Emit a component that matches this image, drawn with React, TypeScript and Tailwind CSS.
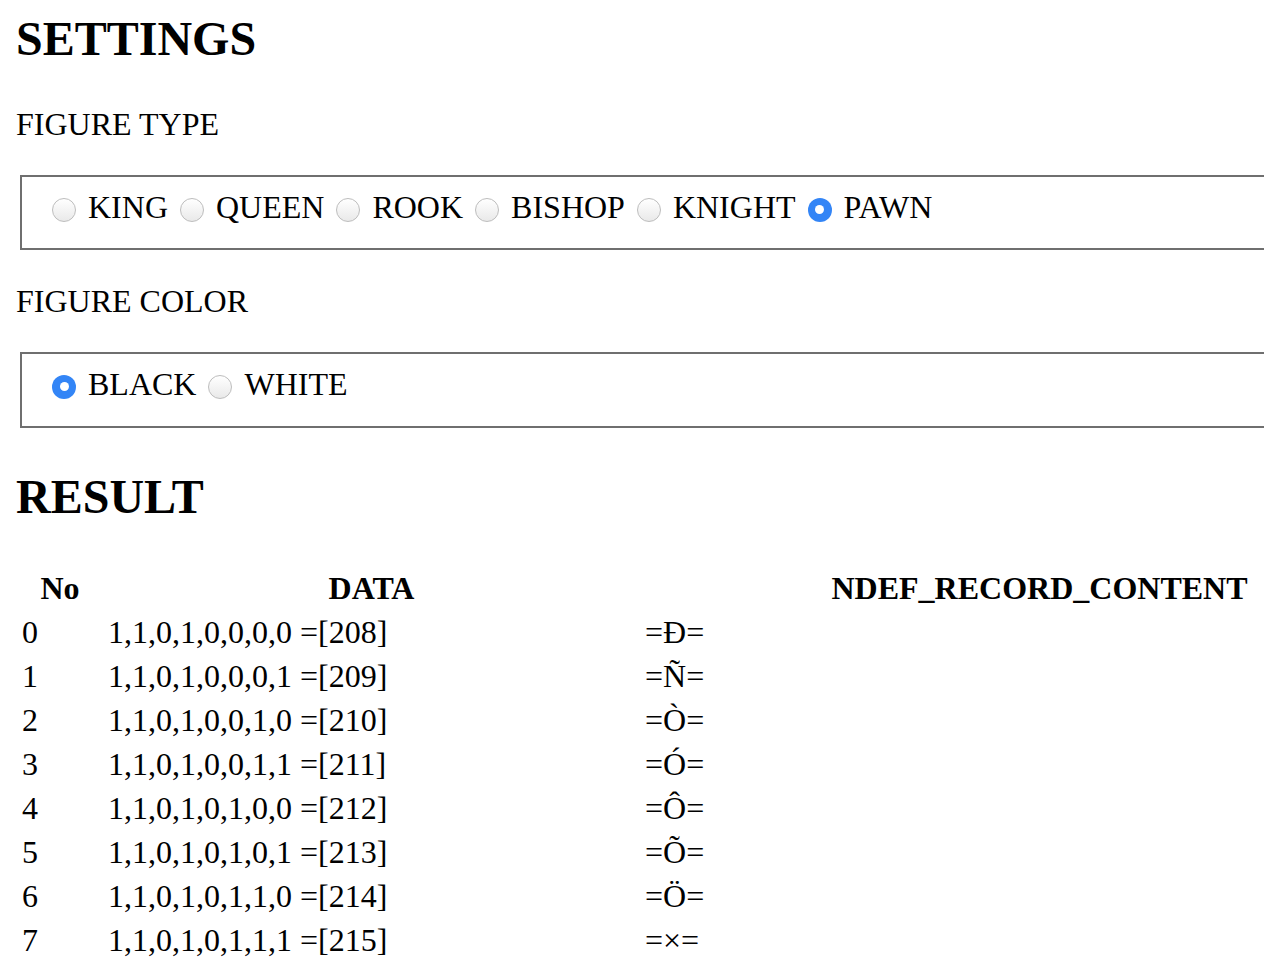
import { useState } from "react";

const figureTypes = ["KING", "QUEEN", "ROOK", "BISHOP", "KNIGHT", "PAWN"] as const;
const figureColors = ["BLACK", "WHITE"] as const;

const rows = [
  { no: 0, data: "1,1,0,1,0,0,0,0 =[208]", content: "=Đ=" },
  { no: 1, data: "1,1,0,1,0,0,0,1 =[209]", content: "=Ñ=" },
  { no: 2, data: "1,1,0,1,0,0,1,0 =[210]", content: "=Ò=" },
  { no: 3, data: "1,1,0,1,0,0,1,1 =[211]", content: "=Ó=" },
  { no: 4, data: "1,1,0,1,0,1,0,0 =[212]", content: "=Ô=" },
  { no: 5, data: "1,1,0,1,0,1,0,1 =[213]", content: "=Õ=" },
  { no: 6, data: "1,1,0,1,0,1,1,0 =[214]", content: "=Ö=" },
  { no: 7, data: "1,1,0,1,0,1,1,1 =[215]", content: "=×=" },
];

function Radio({ checked }: { checked: boolean }) {
  return checked ? (
    <span className="mt-[5px] flex h-[24px] w-[24px] shrink-0 items-center justify-center rounded-full bg-[#3385f6]">
      <span className="h-[9px] w-[9px] rounded-full bg-white" />
    </span>
  ) : (
    <span className="mt-[5px] h-[24px] w-[24px] shrink-0 rounded-full border border-[#bdbdbd] bg-gradient-to-b from-white to-[#e9e9e9]" />
  );
}

function RadioGroup<T extends string>({
  options,
  value,
  onChange,
  tall,
}: {
  options: readonly T[];
  value: T;
  onChange: (v: T) => void;
  tall?: boolean;
}) {
  return (
    <div
      className={`ml-[4px] box-border border-2 border-r-0 border-[#6f6f6f] pl-[30px] pt-[12px] ${
        tall ? "h-[76px]" : "h-[75px]"
      }`}
    >
      <div className="flex items-center gap-[12px] text-[32px] leading-[36px]">
        {options.map((opt) => (
          <button
            key={opt}
            type="button"
            onClick={() => onChange(opt)}
            className="flex items-center gap-[12px] text-left"
          >
            <Radio checked={value === opt} />
            <span>{opt}</span>
          </button>
        ))}
      </div>
    </div>
  );
}

export default function App() {
  const [type, setType] = useState<(typeof figureTypes)[number]>("PAWN");
  const [color, setColor] = useState<(typeof figureColors)[number]>("BLACK");

  return (
    <div
      className="h-[978px] w-[1264px] overflow-hidden bg-white pl-[16px] text-black"
      style={{ fontFamily: '"Liberation Serif", "Times New Roman", serif' }}
    >
      <h2 className="mt-[11px] text-[48px] font-bold leading-[56px]">SETTINGS</h2>

      <div className="mt-[39px] text-[32px] leading-[36px]">FIGURE TYPE</div>
      <div className="mt-[33px]">
        <RadioGroup options={figureTypes} value={type} onChange={setType} />
      </div>

      <div className="mt-[33px] text-[32px] leading-[36px]">FIGURE COLOR</div>
      <div className="mt-[33px]">
        <RadioGroup options={figureColors} value={color} onChange={setColor} tall />
      </div>

      <h2 className="mt-[41px] text-[48px] font-bold leading-[56px]">RESULT</h2>

      {/* result table */}
      <div className="ml-[6px] mt-[41px] grid w-max grid-cols-[76px_527px_789px] gap-x-[10px] text-[32px] leading-[44px]">
        <div className="text-center font-bold">No</div>
        <div className="text-center font-bold">DATA</div>
        <div className="text-center font-bold">NDEF_RECORD_CONTENT</div>
        {rows.map((r) => (
          <div key={r.no} className="contents">
            <div>{r.no}</div>
            <div>{r.data}</div>
            <div>{r.content}</div>
          </div>
        ))}
      </div>
    </div>
  );
}
